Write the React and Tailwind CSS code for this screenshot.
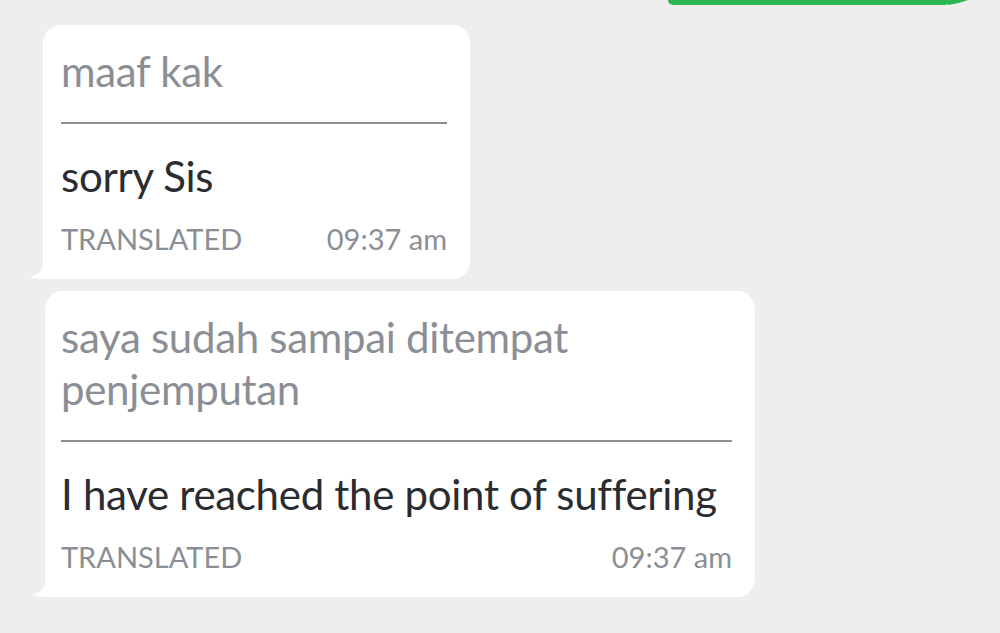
import React from "react";

function Tail() {
  return (
    <svg
      className="absolute -left-[14px] bottom-0"
      width="20"
      height="16"
      viewBox="0 0 20 16"
    >
      <path d="M14 0 C14 8 9 12 0 14 C5 16 12 16 20 16 L20 0 Z" fill="#ffffff" />
    </svg>
  );
}

function Bubble({ width, original, translated }) {
  return (
    <div
      className={`relative bg-white rounded-[18px] rounded-bl-none pr-[23px] pt-[20px] pb-[20px] ${width}`}
    >
      <Tail />
      <p className="text-[42px] leading-[52px] text-[#8b8f95] tracking-[-0.3px]">{original}</p>
      <div className="h-[2px] bg-[#8b8f95] mt-[25px] mb-[26px]" />
      <p className="text-[42px] leading-[52px] text-[#2a2c30] tracking-[-0.3px]">{translated}</p>
      <div className="flex justify-between items-center mt-[17px] text-[29px] leading-[40px] text-[#8b8f95]">
        <span>TRANSLATED</span>
        <span>09:37 am</span>
      </div>
    </div>
  );
}

export default function App() {
  return (
    <div
      className="w-[1000px] h-[633px] overflow-hidden bg-[#eeeeee] flex flex-col"
      style={{ fontFamily: "Lato, 'Open Sans', sans-serif" }}
    >
      <div className="relative self-end mr-[50px] w-[282px] h-[5px] bg-[#2db552] rounded-b-[14px]">
        <svg className="absolute -right-[18px] top-0" width="20" height="5" viewBox="0 0 20 5">
          <path d="M0 0 L20 0 C14 2 8 4 0 5 Z" fill="#2db552" />
        </svg>
      </div>
      <div className="flex flex-col gap-[12px] pl-[43px] pt-[20px]">
        <Bubble width="w-[427px] pl-[18px]" original="maaf kak" translated="sorry Sis" />
        <Bubble
          width="w-[710px] ml-[2px] pl-[16px]"
          original="saya sudah sampai ditempat penjemputan"
          translated="I have reached the point of suffering"
        />
      </div>
    </div>
  );
}
